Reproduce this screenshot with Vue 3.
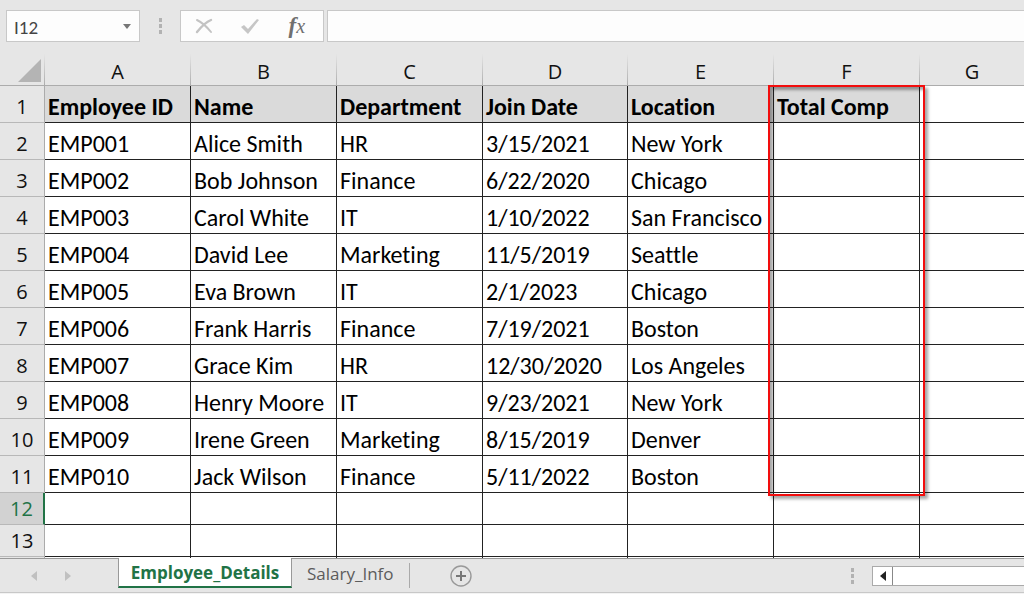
<script setup>
import { ref } from 'vue'

const columns = ['A', 'B', 'C', 'D', 'E', 'F', 'G']
const headings = ['Employee ID', 'Name', 'Department', 'Join Date', 'Location', 'Total Comp']
const records = [
  ['EMP001', 'Alice Smith', 'HR', '3/15/2021', 'New York'],
  ['EMP002', 'Bob Johnson', 'Finance', '6/22/2020', 'Chicago'],
  ['EMP003', 'Carol White', 'IT', '1/10/2022', 'San Francisco'],
  ['EMP004', 'David Lee', 'Marketing', '11/5/2019', 'Seattle'],
  ['EMP005', 'Eva Brown', 'IT', '2/1/2023', 'Chicago'],
  ['EMP006', 'Frank Harris', 'Finance', '7/19/2021', 'Boston'],
  ['EMP007', 'Grace Kim', 'HR', '12/30/2020', 'Los Angeles'],
  ['EMP008', 'Henry Moore', 'IT', '9/23/2021', 'New York'],
  ['EMP009', 'Irene Green', 'Marketing', '8/15/2019', 'Denver'],
  ['EMP010', 'Jack Wilson', 'Finance', '5/11/2022', 'Boston'],
]
const cellName = ref('I12')
const formula = ref('')
</script>

<template>
  <div class="workbook">
    <header class="formula-bar">
      <div class="name-box">
        <input v-model="cellName" class="name-input" type="text" aria-label="Name box" />
        <button class="name-drop" type="button" aria-label="Open name list">
          <svg width="8" height="5" viewBox="0 0 8 5"><path d="M0 0h8L4 5z" fill="#777" /></svg>
        </button>
      </div>
      <span class="grip"><i></i><i></i><i></i></span>
      <div class="actions">
        <button type="button" aria-label="Cancel">
          <svg width="18" height="18" viewBox="0 0 18 18" fill="none" stroke="#c3c3c3" stroke-linecap="round">
            <path d="M2 3C6 5 12 10 16 15" stroke-width="2" />
            <path d="M16 3C11 5 6 10 2 15" stroke-width="2.4" />
          </svg>
        </button>
        <button type="button" aria-label="Enter">
          <svg width="20" height="18" viewBox="0 0 20 18"><path d="M1 10l3-2 4 4 9-10 2 1L8 17z" fill="#c6c6c6" /></svg>
        </button>
        <button class="fx" type="button" aria-label="Insert function">f<span>x</span></button>
      </div>
      <input v-model="formula" class="formula" type="text" aria-label="Formula" />
    </header>

    <main class="sheet">
      <table>
        <colgroup>
          <col class="c-index" />
          <col class="c-wide" /><col class="c-wide" /><col class="c-wide" />
          <col class="c-mid" />
          <col class="c-wide" /><col class="c-wide" />
          <col />
        </colgroup>
        <thead>
          <tr>
            <th class="corner">
              <button type="button" aria-label="Select all">
                <svg width="23" height="23" viewBox="0 0 23 23"><path d="M23 0v23H0z" fill="#b4b4b4" /></svg>
              </button>
            </th>
            <th v-for="c in columns" :key="c" class="letter" scope="col">{{ c }}</th>
          </tr>
        </thead>
        <tbody>
          <tr class="titles">
            <th class="index" scope="row">1</th>
            <td v-for="h in headings" :key="h">{{ h }}</td>
            <td class="blank"></td>
          </tr>
          <tr v-for="(r, i) in records" :key="r[0]">
            <th class="index" scope="row">{{ i + 2 }}</th>
            <td v-for="(v, j) in r" :key="j">{{ v }}</td>
            <td></td>
            <td></td>
          </tr>
          <tr v-for="n in [12, 13]" :key="n" class="short">
            <th class="index" :class="{ current: n === 12 }" scope="row">{{ n }}</th>
            <td v-for="c in columns" :key="c"></td>
          </tr>
          <tr class="short">
            <th class="index"></th>
            <td v-for="c in columns" :key="c"></td>
          </tr>
        </tbody>
      </table>
      <div class="callout"></div>
    </main>

    <footer class="tab-bar">
      <div class="arrows">
        <button type="button" aria-label="Previous sheet">
          <svg width="6" height="10" viewBox="0 0 6 10"><path d="M6 0v10L0 5z" fill="#c0c0c0" /></svg>
        </button>
        <button type="button" aria-label="Next sheet">
          <svg width="6" height="10" viewBox="0 0 6 10"><path d="M0 0v10l6-5z" fill="#c0c0c0" /></svg>
        </button>
      </div>
      <button class="tab active" type="button">Employee_Details</button>
      <button class="tab" type="button">Salary_Info</button>
      <span class="divider"></span>
      <button class="add" type="button" aria-label="New sheet">
        <svg width="22" height="22" viewBox="0 0 22 22" fill="none">
          <circle cx="11" cy="11" r="10" stroke="#999" stroke-width="1.4" />
          <path d="M11 6v10M6 11h10" stroke="#777" stroke-width="2" />
        </svg>
      </button>
      <span class="grip"><i></i><i></i><i></i></span>
      <div class="scroller">
        <button type="button" aria-label="Scroll left">
          <svg width="6" height="10" viewBox="0 0 6 10"><path d="M6 0v10L0 5z" fill="#222" /></svg>
        </button>
      </div>
    </footer>
  </div>
</template>

<style>
body {
  margin: 0;
  background: #e6e6e6;
}
</style>

<style scoped>
.workbook {
  display: flex;
  flex-direction: column;
  height: 100vh;
  overflow: hidden;
  box-sizing: border-box;
  background: #e6e6e6;
  border-bottom: 1px solid #f3f3f3;
  font-family: "Open Sans", "Noto Sans", sans-serif;
  color: #111;
}
button {
  display: flex;
  align-items: center;
  justify-content: center;
  padding: 0;
  border: 0;
  background: none;
  font: inherit;
  color: inherit;
}
input {
  box-sizing: border-box;
  min-width: 0;
  border: 0;
  outline: 0;
  background: #fdfdfd;
  font: inherit;
}
.formula-bar {
  display: flex;
  flex: none;
  height: 32px;
  padding: 10px 0 10px 6px;
}
.name-box,
.actions {
  display: flex;
  box-sizing: border-box;
  border: 1px solid #c8c8c8;
  background: #fdfdfd;
}
.name-box {
  width: 134px;
}
.name-input {
  flex: 1;
  padding: 2px 0 0 7px;
  font-family: Carlito, Lato, sans-serif;
  font-size: 19px;
  color: #444;
}
.name-drop {
  width: 25px;
}
.grip {
  display: flex;
  flex-direction: column;
  align-items: center;
  justify-content: center;
  gap: 2px;
  width: 40px;
}
.grip i {
  width: 3px;
  height: 4px;
  background: #b2b2b2;
}
.actions {
  width: 144px;
  margin-right: 3px;
  padding-right: 3px;
}
.actions button {
  flex: 1;
}
.fx {
  font: italic bold 23px "Liberation Serif", serif;
  color: #707070;
}
.fx span {
  font-size: 20px;
  font-weight: 400;
}
.formula {
  flex: 1;
  border: 1px solid #c8c8c8;
  border-right: 0;
}
.sheet {
  position: relative;
  flex: 1;
  min-height: 0;
  overflow: hidden;
}
table {
  width: 100%;
  table-layout: fixed;
  border-collapse: separate;
  border-spacing: 0;
}
.c-index {
  width: 45px;
}
.c-wide {
  width: 146px;
}
.c-mid {
  width: 145px;
}
th,
td {
  box-sizing: border-box;
  padding: 0;
  white-space: nowrap;
}
thead th {
  height: 34px;
  border-bottom: 1px solid #ababab;
  border-right: 1px solid;
  border-image: linear-gradient(#e6e6e6 8%, #ababab) 1;
  font-size: 20px;
  font-weight: 400;
  line-height: 27px;
  vertical-align: bottom;
}
thead th:last-child {
  border-right-width: 0;
}
.corner button {
  width: 41px;
  height: 30px;
  justify-content: flex-end;
}
.corner svg {
  display: block;
}
.index {
  height: 37px;
  border-right: 1px solid #ababab;
  border-bottom: 1px solid #b8b8b8;
  font-size: 20px;
  font-weight: 400;
  line-height: 30px;
  vertical-align: bottom;
}
td {
  padding-left: 3px;
  border-right: 1px solid #222;
  border-bottom: 1px solid #222;
  background: #fff;
  font-family: Carlito, Lato, sans-serif;
  font-size: 24px;
  font-variant-ligatures: none;
  line-height: 30px;
  vertical-align: bottom;
  color: #000;
}
td:last-child {
  border-right: 0;
}
.titles td {
  background: #dadada;
  font-weight: 700;
}
.titles .blank {
  background: #fff;
}
.short .index {
  height: 32px;
  line-height: 31px;
}
.short .current {
  border-right: 2px solid #217346;
  background: #d2d2d2;
  color: #217346;
}
/* Highlight drawn over column F */
.callout {
  position: absolute;
  top: 33px;
  left: 768px;
  box-sizing: border-box;
  width: 157px;
  height: 411px;
  border: 2px solid #f20d0d;
  box-shadow: 3px 3px 3px rgba(0, 0, 0, 0.35), inset 3px 3px 3px rgba(0, 0, 0, 0.35);
}
.tab-bar {
  display: flex;
  flex: none;
  box-sizing: border-box;
  height: 35px;
  border-top: 1px solid #999;
  border-bottom: 1px solid #c8c8c8;
}
.arrows {
  display: flex;
  box-sizing: border-box;
  width: 118px;
  gap: 28px;
  padding-left: 31px;
}
.tab {
  height: 28px;
  padding: 0 15px;
  font-size: 17px;
  color: #5c5c5c;
}
.tab.active {
  box-sizing: border-box;
  width: 174px;
  height: 30px;
  padding: 0;
  margin-top: -1px;
  border: 1px solid #999;
  border-top: 0;
  border-bottom: 2px solid #217346;
  background: #fff;
  font-weight: 700;
  color: #217346;
}
.divider {
  width: 1px;
  height: 25px;
  margin-top: 4px;
  background: #aaa;
}
.add {
  margin-left: 40px;
}
.tab-bar .grip {
  margin-left: auto;
}
.scroller {
  display: flex;
  box-sizing: border-box;
  width: 152px;
  height: 20px;
  margin-top: 7px;
  border: 1px solid #aaa;
  border-right: 0;
  background: #fff;
}
.scroller button {
  width: 20px;
  border-right: 1px solid #888;
}
</style>
